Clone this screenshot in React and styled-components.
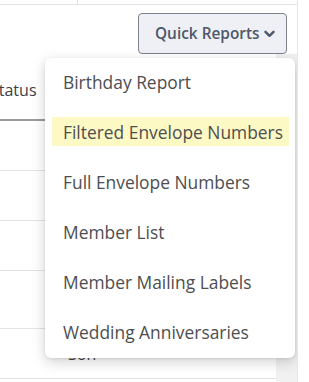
import React from "react";
import styled, { createGlobalStyle } from "styled-components";

const Global = createGlobalStyle`
  html, body { margin: 0; padding: 0; background: #fff; }
  body { font-family: "Open Sans", "Liberation Sans", sans-serif; overflow: hidden; }
  * { box-sizing: border-box; }
`;

const Page = styled.div`
  position: relative;
  width: 298px;
  height: 382px;
  border-right: 1px solid #e6e6e6;
  overflow: hidden;
`;

const TopStrip = styled.div`
  height: 5px;
  display: flex;
  border-bottom: 1px solid #e4e4e4;
`;

const TopCell = styled.div`
  width: ${(p) => p.$w}px;
  border-right: 1px solid #e4e4e4;
`;

const Toolbar = styled.div`
  display: flex;
  justify-content: flex-end;
  padding: 8px 10px 0 0;
`;

const ReportButton = styled.button`
  display: flex;
  align-items: center;
  gap: 4px;
  width: 149px;
  height: 41px;
  padding: 0 0 0 16px;
  background: #eef0f6;
  border: 1px solid #7d828c;
  border-radius: 4px;
  color: #4d5868;
  font-family: "Open Sans", "Liberation Sans", sans-serif;
  font-size: 15.4px;
  font-weight: 600;
  cursor: pointer;
`;

const TableArea = styled.div`
  display: flex;
`;

const TableWrap = styled.div`
  width: 276px;
  overflow: hidden;
`;

const Table = styled.div`
  margin-left: -10px;
  width: 286px;
`;

const HeaderRow = styled.div`
  height: 67px;
  display: flex;
  align-items: flex-end;
  padding-bottom: 18px;
  border-bottom: 2px solid #9a9a9a;
  color: #3b4048;
  font-size: 16px;
  line-height: 22px;
`;

const Row = styled.div`
  height: ${(p) => p.$h}px;
  display: flex;
  align-items: center;
  padding: 0 0 0 78px;
  border-bottom: 1px solid #e3e3e3;
  color: #444;
  font-size: 16px;
`;

const Track = styled.div`
  width: 21px;
  align-self: stretch;
  background: #f1f1f1;
  height: 340px;
`;

const Menu = styled.div`
  position: absolute;
  left: 45px;
  top: 58px;
  width: 250px;
  height: 300px;
  background: #fff;
  border-radius: 6px;
  box-shadow: 0 4px 14px rgba(0, 0, 0, 0.18), 0 1px 3px rgba(0, 0, 0, 0.08);
  padding: 9px 6px 11px 7px;
  display: flex;
  flex-direction: column;
  gap: 21px;
`;

const MenuItem = styled.div`
  height: 29px;
  display: flex;
  align-items: center;
  padding-left: 11px;
  font-size: 17.4px;
  color: #4e4e50;
  white-space: nowrap;
  background: ${(p) => (p.$active ? "#fdf9c4" : "transparent")};
`;

const Chevron = () => (
  <svg width="11" height="8" viewBox="0 0 11 8" style={{ marginTop: 1 }}>
    <path d="M1.5 1.8 L5.5 5.8 L9.5 1.8" fill="none" stroke="#4d5868" strokeWidth="2.4" strokeLinecap="round" strokeLinejoin="round" />
  </svg>
);

const items = [
  "Birthday Report",
  "Filtered Envelope Numbers",
  "Full Envelope Numbers",
  "Member List",
  "Member Mailing Labels",
  "Wedding Anniversaries",
];

export default function App() {
  return (
    <>
      <Global />
      <Page>
        <TopStrip>
          <TopCell $w={78} />
        </TopStrip>
        <Toolbar>
          <ReportButton>
            Quick Reports
            <Chevron />
          </ReportButton>
        </Toolbar>
        <TableArea>
          <TableWrap>
            <Table>
              <HeaderRow>Status</HeaderRow>
              <Row $h={50} />
              <Row $h={50} />
              <Row $h={50} />
              <Row $h={58} />
              <Row $h={50}>Son</Row>
            </Table>
          </TableWrap>
          <Track />
        </TableArea>
        <Menu>
          {items.map((t, i) => (
            <MenuItem key={t} $active={i === 1}>
              {t}
            </MenuItem>
          ))}
        </Menu>
      </Page>
    </>
  );
}
